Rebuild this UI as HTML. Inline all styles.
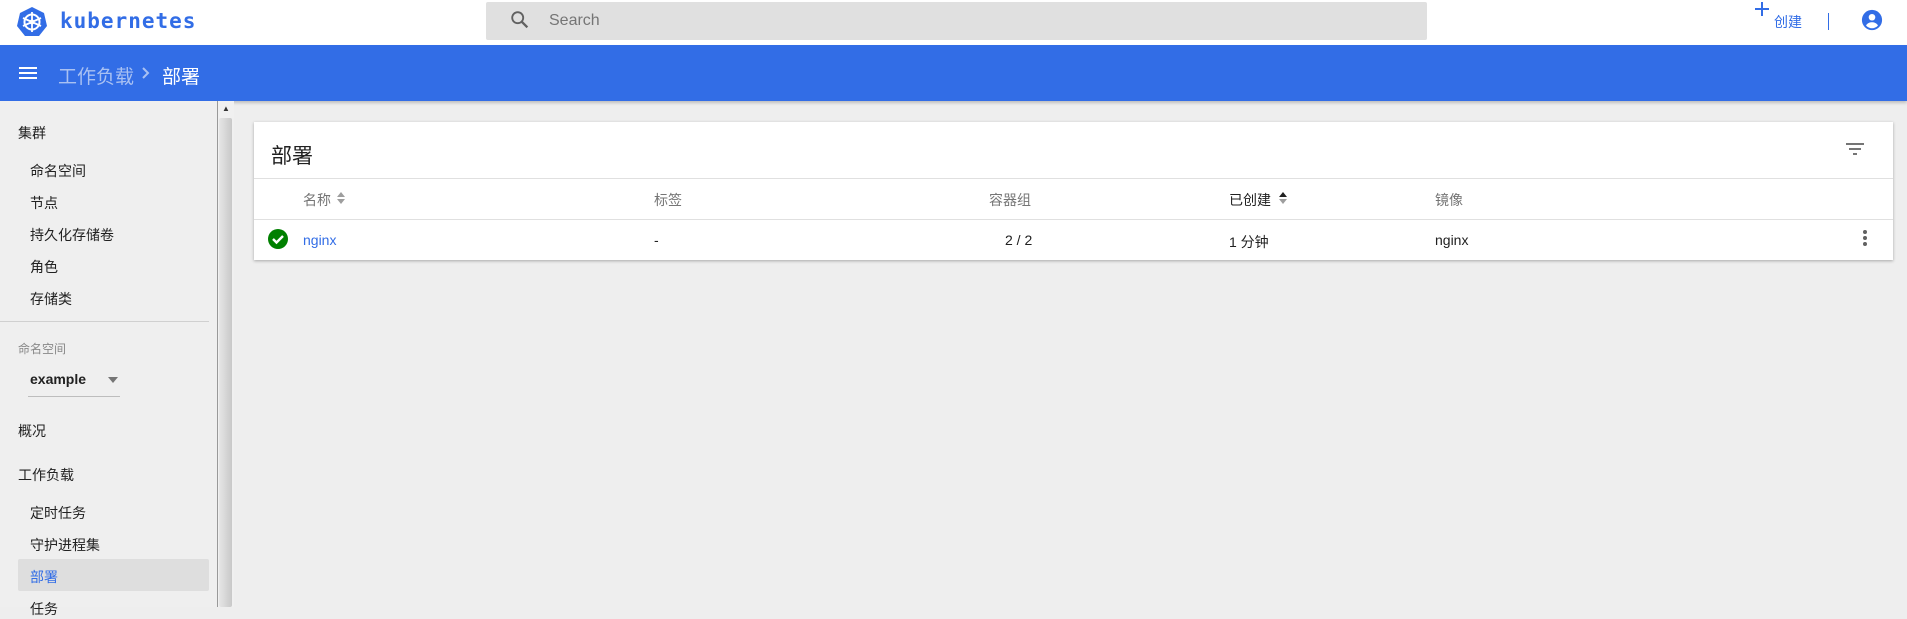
<!DOCTYPE html>
<html><head><meta charset="utf-8"><style>
*{margin:0;padding:0;box-sizing:border-box}
body{width:1907px;height:607px;overflow:hidden;background:#eeeeee;font-family:"Liberation Sans","Noto Sans CJK SC",sans-serif;position:relative}
.a{position:absolute;white-space:nowrap}
.side{font-size:14px;color:#212121}
.th{font-size:14px;color:#757575;top:190px}
.td{font-size:14px;color:#212121;top:232px}
</style></head><body>
<div class="a" style="left:0;top:0;width:1907px;height:45px;background:#fff"></div>
<svg class="a" style="left:16px;top:6px" width="32" height="31" viewBox="0 0 32 31"><polygon points="16,1 28,7 31,20 23,30 9,30 1,20 4,7" fill="#326de6"/><circle cx="16" cy="16" r="7.5" fill="none" stroke="#fff" stroke-width="2"/><g stroke="#fff" stroke-width="1.8"><line x1="16" y1="6" x2="16" y2="26"/><line x1="7" y1="12" x2="25" y2="20"/><line x1="25" y1="12" x2="7" y2="20"/></g><circle cx="16" cy="16" r="2.5" fill="#fff"/></svg>
<div class="a" style="left:60px;top:9px;font-size:21px;font-weight:bold;color:#326de6;letter-spacing:1px;font-family:'DejaVu Sans Mono','Liberation Mono',monospace">kubernetes</div>
<div class="a" style="left:486px;top:2px;width:941px;height:38px;background:#e0e0e0;border-radius:2px"></div>
<svg class="a" style="left:509px;top:9px" width="22" height="22" viewBox="0 0 24 24"><circle cx="9.5" cy="9.5" r="6" fill="none" stroke="#616161" stroke-width="2"/><line x1="14" y1="14" x2="20" y2="20" stroke="#616161" stroke-width="2.5"/></svg>
<div class="a" style="left:549px;top:12px;font-size:16px;color:#757575">Search</div>
<div class="a" style="left:1755px;top:8px;width:14px;height:2px;background:#326de6"></div>
<div class="a" style="left:1761px;top:2px;width:2px;height:14px;background:#326de6"></div>
<div class="a" style="left:1774px;top:12px;font-size:14px;color:#326de6">创建</div>
<div class="a" style="left:1828px;top:13px;width:1px;height:17px;background:#326de6"></div>
<svg class="a" style="left:1861px;top:9px" width="22" height="22" viewBox="0 0 24 24"><circle cx="12" cy="12" r="11" fill="#326de6"/><circle cx="12" cy="9" r="3.6" fill="#fff"/><path d="M5.5 18c1.5-2.5 4-3.5 6.5-3.5s5 1 6.5 3.5c-1.8 2-4 3-6.5 3s-4.7-1-6.5-3z" fill="#fff"/></svg>
<div class="a" style="left:0;top:45px;width:1907px;height:56px;background:#326de6;box-shadow:0 2px 3px rgba(0,0,0,.2)"></div>
<div class="a" style="left:19px;top:67px;width:18px;height:2px;background:#fff;box-shadow:0 5px 0 #fff,0 10px 0 #fff"></div>
<div class="a" style="left:58px;top:62px;font-size:19px;color:#a9c1f2">工作负载</div>
<svg class="a" style="left:141px;top:66px" width="10" height="14"><path d="M2 2l5 5-5 5" fill="none" stroke="#a9c1f2" stroke-width="2"/></svg>
<div class="a" style="left:162px;top:62px;font-size:19px;color:#fff">部署</div>
<div class="a" style="left:0;top:101px;width:217px;height:506px;background:#efefef"></div>
<div class="a" style="left:217px;top:101px;width:17px;height:506px;background:#f0f0f0;border-left:1px solid #999"></div>
<div class="a" style="left:219px;top:118px;width:13px;height:489px;background:linear-gradient(90deg,#e6e6e6,#c8c8c8);border-radius:2px"></div>
<div class="a" style="left:222px;top:104px;font-size:8px;color:#333">▲</div>
<div class="a side" style="left:18px;top:123px">集群</div>
<div class="a side" style="left:30px;top:161px">命名空间</div>
<div class="a side" style="left:30px;top:193px">节点</div>
<div class="a side" style="left:30px;top:225px">持久化存储卷</div>
<div class="a side" style="left:30px;top:257px">角色</div>
<div class="a side" style="left:30px;top:289px">存储类</div>
<div class="a" style="left:0;top:321px;width:209px;height:1px;background:#d0d0d0"></div>
<div class="a" style="left:18px;top:340px;font-size:12px;color:#888">命名空间</div>
<div class="a" style="left:30px;top:371px;font-size:14px;font-weight:bold;color:#212121">example</div>
<svg class="a" style="left:107px;top:376px" width="12" height="8"><path d="M1 1h10L6 7z" fill="#757575"/></svg>
<div class="a" style="left:28px;top:396px;width:92px;height:1px;background:#bdbdbd"></div>
<div class="a side" style="left:18px;top:421px">概况</div>
<div class="a side" style="left:18px;top:465px">工作负载</div>
<div class="a side" style="left:30px;top:503px">定时任务</div>
<div class="a side" style="left:30px;top:535px">守护进程集</div>
<div class="a" style="left:18px;top:559px;width:191px;height:32px;background:#dedede;border-radius:2px"></div>
<div class="a side" style="left:30px;top:567px;color:#326de6">部署</div>
<div class="a side" style="left:30px;top:599px">任务</div>
<div class="a" style="left:254px;top:122px;width:1639px;height:138px;background:#fff;box-shadow:0 1px 3px rgba(0,0,0,.3)"></div>
<div class="a" style="left:271px;top:140px;font-size:21px;color:#212121">部署</div>
<div class="a" style="left:1846px;top:143px;width:18px;height:2px;background:#757575"></div>
<div class="a" style="left:1849px;top:148px;width:12px;height:2px;background:#757575"></div>
<div class="a" style="left:1853px;top:153px;width:4px;height:2px;background:#757575"></div>
<div class="a" style="left:254px;top:178px;width:1639px;height:1px;background:#e0e0e0"></div>
<div class="a" style="left:254px;top:219px;width:1639px;height:1px;background:#e0e0e0"></div>
<div class="a th" style="left:303px">名称</div>
<svg class="a" style="left:336px;top:190px" width="10" height="16"><path d="M1 7L5 2L9 7z M1 9L5 14L9 9z" fill="#9e9e9e"/></svg>
<div class="a th" style="left:654px">标签</div>
<div class="a th" style="left:989px">容器组</div>
<div class="a th" style="left:1229px;color:#212121">已创建</div>
<svg class="a" style="left:1278px;top:190px" width="10" height="16"><path d="M1 7L5 2L9 7z" fill="#212121"/><path d="M1 9L5 14L9 9z" fill="#9e9e9e"/></svg>
<div class="a th" style="left:1435px">镜像</div>
<svg class="a" style="left:268px;top:229px" width="20" height="20" viewBox="0 0 20 20"><circle cx="10" cy="10" r="10" fill="#008000"/><path d="M5 10l3.5 3.5L15 7" fill="none" stroke="#fff" stroke-width="2.4"/></svg>
<div class="a td" style="left:303px;color:#326de6">nginx</div>
<div class="a td" style="left:654px">-</div>
<div class="a td" style="left:1005px">2 / 2</div>
<div class="a td" style="left:1229px">1 分钟</div>
<div class="a td" style="left:1435px">nginx</div>
<div class="a" style="left:1863px;top:230px;width:4px;height:4px;border-radius:50%;background:#616161;box-shadow:0 6px 0 #616161,0 12px 0 #616161"></div>
</body></html>
